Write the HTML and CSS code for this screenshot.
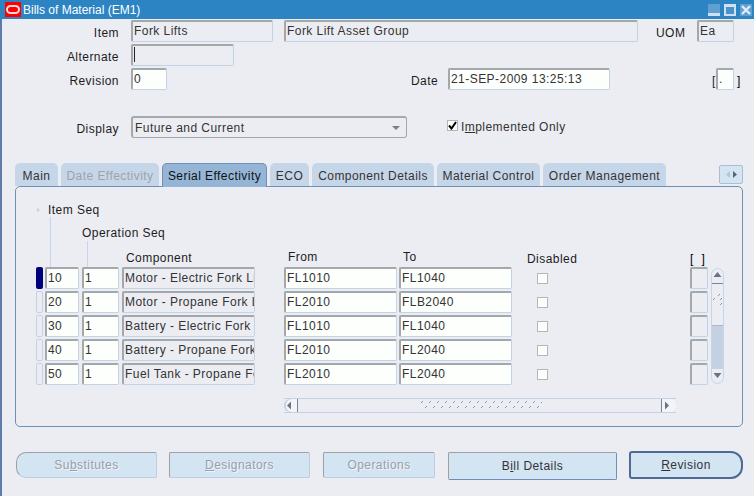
FILE: index.html
```html
<!DOCTYPE html>
<html lang="en">
<head>
    <meta charset="UTF-8">
    <title>Bills of Material (EM1)</title>
    <link rel="stylesheet" href="styles.css">
</head>
<body>
    <div class="window">
        <header class="titlebar">
            <div class="logo"><span class="logo-ring"></span></div>
            <span class="title">Bills of Material (EM1)</span>
            <div class="win-buttons">
                <svg width="12" height="12" viewBox="0 0 12 12"><rect width="12" height="12" fill="#5fa0d2"/><rect y="9" width="12" height="3" fill="#cfe0ef"/></svg>
                <svg width="12" height="12" viewBox="0 0 12 12"><rect width="12" height="12" fill="#cfe0ef"/><rect x="2" y="3" width="8" height="7" fill="#4a92cb"/></svg>
                <svg width="12" height="12" viewBox="0 0 12 12"><rect width="12" height="12" fill="#5fa0d2"/><path d="M2 2l8 8M10 2l-8 8" stroke="#e2edf6" stroke-width="2.4"/></svg>
            </div>
        </header>

        <div class="form-row first">
            <label class="lbl">Item</label>
            <div class="field w-item">Fork Lifts</div>
            <div class="field w-desc">Fork Lift Asset Group</div>
            <label class="lbl-inline uom-lbl">UOM</label>
            <div class="field w-uom">Ea</div>
        </div>
        <div class="form-row">
            <label class="lbl">Alternate</label>
            <div class="field w-alt"><span class="caret"></span></div>
        </div>
        <div class="form-row">
            <label class="lbl">Revision</label>
            <div class="field white w-rev">0</div>
            <label class="lbl-inline date-lbl">Date</label>
            <div class="field white w-date">21-SEP-2009 13:25:13</div>
            <span class="lbl-inline bracket-open">[</span>
            <div class="field white w-dff">.</div>
            <span class="lbl-inline bracket-close">]</span>
        </div>
        <div class="form-row display-row">
            <label class="lbl">Display</label>
            <div class="select w-select">Future and Current<span class="select-arrow"></span></div>
            <span class="check checked">
                <svg width="9" height="9" viewBox="0 0 9 9"><path d="M1 4.500l2.500 3L8 1" fill="none" stroke="#000" stroke-width="2"/></svg>
            </span>
            <span class="check-lbl">I<u>m</u>plemented Only</span>
        </div>

        <div class="tabs">
            <div class="tab t-main">Main</div>
            <div class="tab t-date off">Date Effectivity</div>
            <div class="tab t-serial active">Serial Effectivity</div>
            <div class="tab t-eco">ECO</div>
            <div class="tab t-comp">Component Details</div>
            <div class="tab t-mat">Material Control</div>
            <div class="tab t-order">Order Management</div>
            <div class="tab-scroll">
                <svg width="22" height="17" viewBox="0 0 22 17"><path d="M10 5v7l-4-3.500z" fill="#b5c4d6"/><path d="M13 5v7l4-3.500z" fill="#5c6470"/></svg>
            </div>
        </div>

        <div class="panel">
            <div class="seq-cols seq-head">
                <div class="head-item"><span class="tri"></span>Item Seq</div>
                <div class="line-item"></div>
                <div class="head-op">Operation Seq</div>
                <div class="line-op"></div>
                <div class="head head-comp">Component</div>
                <div class="head head-from">From</div>
                <div class="head head-to">To</div>
                <div class="head head-dis">Disabled</div>
                <div class="head head-dff">[ ]</div>
            </div>

            <div class="seq-cols seq-rows">
                <div class="vscroll">
                    <div class="vs-up"><svg width="13" height="10" viewBox="0 0 13 10"><path d="M2.500 7h8l-4-5z" fill="#6b7186"/></svg></div>
                    <div class="vs-thumb">
                        <svg width="9" height="14" viewBox="0 0 9 14"><path d="M6 0h1v1H6zM5 1h1v1H5zM1 4h1v1H1zM0 5h1v1H0zM8 4h1v1H8zM7 5h1v1H7zM8 9h1v1H8zM7 10h1v1H7z" fill="#8c97a8"/></svg>
                    </div>
                    <div class="vs-track"></div>
                    <div class="vs-down"><svg width="13" height="10" viewBox="0 0 13 10"><path d="M2.500 3h8l-4 5z" fill="#6b7186"/></svg></div>
                </div>

                <span class="ind current"></span>
                <div class="field white c-seq">10</div>
                <div class="field white c-op">1</div>
                <div class="field c-comp">Motor - Electric Fork Lift</div>
                <div class="field white c-range">FL1010</div>
                <div class="field white c-range">FL1040</div>
                <div class="c-dis"><span class="check"></span></div>
                <div class="field c-dff"></div>

                <span class="ind"></span>
                <div class="field white c-seq">20</div>
                <div class="field white c-op">1</div>
                <div class="field c-comp">Motor - Propane Fork Lift</div>
                <div class="field white c-range">FL2010</div>
                <div class="field white c-range">FLB2040</div>
                <div class="c-dis"><span class="check"></span></div>
                <div class="field c-dff"></div>

                <span class="ind"></span>
                <div class="field white c-seq">30</div>
                <div class="field white c-op">1</div>
                <div class="field c-comp">Battery - Electric Fork Lift</div>
                <div class="field white c-range">FL1010</div>
                <div class="field white c-range">FL1040</div>
                <div class="c-dis"><span class="check"></span></div>
                <div class="field c-dff"></div>

                <span class="ind"></span>
                <div class="field white c-seq">40</div>
                <div class="field white c-op">1</div>
                <div class="field c-comp">Battery - Propane Fork Lift</div>
                <div class="field white c-range">FL2010</div>
                <div class="field white c-range">FL2040</div>
                <div class="c-dis"><span class="check"></span></div>
                <div class="field c-dff"></div>

                <span class="ind"></span>
                <div class="field white c-seq">50</div>
                <div class="field white c-op">1</div>
                <div class="field c-comp">Fuel Tank - Propane Fork Lift</div>
                <div class="field white c-range">FL2010</div>
                <div class="field white c-range">FL2040</div>
                <div class="c-dis"><span class="check"></span></div>
                <div class="field c-dff"></div>
            </div>

            <div class="hscroll">
                <div class="hs-left"><svg width="10" height="11" viewBox="0 0 10 11"><path d="M7 1.500v8l-4-4z" fill="#6b7186"/></svg></div>
                <div class="hs-thumb">
                    <svg width="123" height="9" viewBox="0 0 123 9">
                        <defs>
                            <pattern id="grip" width="8" height="9" patternUnits="userSpaceOnUse">
                                <path d="M3 0h1v1H3zM2 1h1v1H2zM7 5h1v1H7zM6 6h1v1H6z" fill="#8c97a8"/>
                            </pattern>
                        </defs>
                        <rect width="123" height="9" fill="url(#grip)"/>
                    </svg>
                </div>
                <div class="hs-right"><svg width="10" height="11" viewBox="0 0 10 11"><path d="M3 1.500v8l4-4z" fill="#6b7186"/></svg></div>
            </div>
        </div>

        <div class="actions">
            <button class="btn off b-sub"><span>Su<u>b</u>stitutes</span></button>
            <button class="btn off b-des"><span><u>D</u>esignators</span></button>
            <button class="btn off b-ops"><span>Operations</span></button>
            <button class="btn b-bill"><span>B<u>i</u>ll Details</span></button>
            <button class="btn b-rev"><span><u>R</u>evision</span></button>
        </div>
    </div>
</body>
</html>
```

FILE: styles.css
```css
* {
    margin: 0;
    padding: 0;
    box-sizing: border-box;
}

html, body {
    width: 754px;
    height: 496px;
    overflow: hidden;
}

body {
    background: #ecedf3;
    color: #1c1c1c;
    font-family: "Liberation Sans", Arial, sans-serif;
    font-size: 12px;
    letter-spacing: 0.45px;
}

.window {
    height: 496px;
    border-left: 2px solid #5f7ca6;
}

/* title bar */
.titlebar {
    display: flex;
    align-items: center;
    height: 19px;
    margin-left: -2px;
    background: #2d84c3;
    color: #fff;
}

.logo {
    display: flex;
    align-items: center;
    justify-content: center;
    width: 16px;
    height: 15px;
    margin-left: 5px;
    background: #f00;
}

.logo-ring {
    width: 14px;
    height: 9px;
    border: 2px solid #ffd9d9;
    border-radius: 5px;
}

.title {
    margin-left: 2px;
    letter-spacing: 0;
}

.win-buttons {
    display: flex;
    gap: 4px;
    margin-left: auto;
    margin-right: 2px;
}

/* header form */
.form-row {
    display: flex;
    align-items: center;
    height: 22px;
    margin-top: 2px;
}

.form-row.first {
    margin-top: 1px;
}

.form-row.display-row {
    margin-top: 26px;
}

.lbl {
    width: 117px;
    margin-right: 12px;
    padding-top: 3px;
    text-align: right;
}

.lbl-inline {
    padding-top: 3px;
}

.field {
    flex: none;
    height: 22px;
    padding: 0 1px;
    overflow: hidden;
    border: 1px solid #c3d3e6;
    border-top: 2px solid #a5a8ab;
    border-left: 2px solid #a5a8ab;
    border-radius: 2px;
    background: #ecedf3;
    color: #333;
    line-height: 18px;
    white-space: nowrap;
}

.field.white {
    background: #fcfffc;
}

.w-item { width: 142px; }
.w-desc { width: 354px; margin-left: 11px; }
.w-uom { width: 37px; margin-left: 11px; }
.w-alt { width: 103px; }
.w-rev { width: 36px; }
.w-date { width: 162px; margin-left: 11px; }
.w-dff { width: 18px; margin: 0 3px 0 2px; }

.uom-lbl { margin-left: 18px; width: 30px; }
.date-lbl { margin-left: 244px; width: 26px; }
.bracket-open { margin-left: 102px; width: 2px; }
.bracket-close { color: #000; }

.caret {
    display: block;
    width: 1px;
    height: 15px;
    margin-top: 1px;
    background: #222;
}

.select {
    display: flex;
    align-items: center;
    justify-content: space-between;
    height: 22px;
    padding: 0 6px 0 2px;
    border: 1px solid #a5a8ab;
    border-top-width: 2px;
    border-left-width: 2px;
    border-radius: 3px;
    color: #333;
}

.w-select { width: 276px; }

.select-arrow {
    border-top: 4px solid #7a8088;
    border-left: 4px solid transparent;
    border-right: 4px solid transparent;
}

.check {
    display: inline-flex;
    align-items: center;
    justify-content: center;
    width: 11px;
    height: 11px;
    border: 1px solid #b5b5b5;
    background: #fcfffc;
}

.check.checked {
    margin-left: 40px;
    margin-top: -3px;
}

.check-lbl {
    margin-left: 3px;
    color: #333;
}

/* tabs */
.tabs {
    display: flex;
    align-items: flex-start;
    position: relative;
    z-index: 1;
    height: 23px;
    margin-top: 25px;
    margin-left: 13px;
    gap: 3px;
}

.tab {
    flex: none;
    height: 23px;
    border-radius: 5px 5px 0 0;
    background: #c6d6e9;
    color: #333;
    line-height: 26px;
    text-align: center;
}

.tab.off {
    color: #9da3a8;
}

.tab.active {
    height: 24px;
    border: 1px solid #6f90b5;
    border-bottom: 0;
    background: #95b5d7;
    color: #111;
    line-height: 24px;
}

.t-main { width: 43px; }
.t-date { width: 98px; }
.t-serial { width: 105px; }
.t-eco { width: 39px; }
.t-comp { width: 122px; }
.t-mat { width: 103px; }
.t-order { width: 123px; }

.tab-scroll {
    width: 24px;
    height: 19px;
    margin-top: 2px;
    margin-left: 50px;
    border: 1px solid #a9bdd4;
    border-radius: 2px;
    background: #d3e4f3;
}

/* panel */
.panel {
    width: 728px;
    height: 241px;
    margin-left: 13px;
    padding: 16px 0 0 20px;
    border: 1px solid #6f90b5;
    border-radius: 5px;
}

.seq-cols {
    display: grid;
    grid-template-columns: 9px 37px 40px 162px 115px 115px 176px 21px 13px;
}

.seq-head {
    grid-template-rows: 14px 24px 26px;
}

.seq-rows {
    grid-auto-rows: 24px;
}

.head-item {
    display: flex;
    align-items: center;
    grid-column: 1 / span 4;
    grid-row: 1;
    gap: 8px;
}

.tri {
    margin-left: 1px;
    border-left: 3px solid #c3d0e0;
    border-top: 2px solid transparent;
    border-bottom: 2px solid transparent;
}

.line-item {
    grid-column: 2;
    grid-row: 2 / span 2;
    margin-left: 5px;
    border-left: 1px solid #c6d6e9;
}

.head-op {
    grid-column: 3 / span 3;
    grid-row: 2;
    align-self: end;
    line-height: 15px;
}

.line-op {
    grid-column: 3;
    grid-row: 3;
    margin-left: 5px;
    border-left: 1px solid #c6d6e9;
}

.head {
    grid-row: 3;
    align-self: end;
    line-height: 14px;
}

.head-comp { grid-column: 4; padding: 0 0 2px 4px; }
.head-from { grid-column: 5; padding: 0 0 3px 4px; }
.head-to { grid-column: 6; padding: 0 0 3px 4px; }
.head-dis { grid-column: 7; padding: 0 0 1px 13px; }
.head-dff { grid-column: 8 / span 2; padding-bottom: 1px; color: #000; word-spacing: 4px; }

.ind {
    grid-column: 1;
    width: 7px;
    height: 22px;
    border: 1px solid #c3d3e6;
    border-radius: 2px;
}

.ind.current {
    border: 0;
    background: #00007b;
}

.c-seq { width: 34px; }
.c-op { width: 37px; }
.c-comp { width: 133px; }
.c-range { width: 113px; }
.c-dff { width: 18px; }

.c-dis {
    display: flex;
    align-items: center;
    padding-left: 23px;
    height: 22px;
}

.vscroll {
    display: flex;
    flex-direction: column;
    grid-column: 9;
    grid-row: 1 / span 5;
    height: 116px;
    margin-top: 1px;
    overflow: hidden;
    border: 1px solid #c6d6e9;
    border-radius: 7px;
    background: #ecedf3;
}

.vs-up {
    height: 15px;
    border-bottom: 1px solid #7c8399;
    margin: 0 -1px;
}

.vs-thumb {
    display: flex;
    align-items: center;
    justify-content: center;
    height: 42px;
    border-bottom: 1px solid #a9b8cc;
    margin: 0 -1px;
    padding-bottom: 8px;
}

.vs-track {
    flex: 1;
    margin: 0 -1px;
    background: #c3d1e3;
}

.vs-down {
    height: 14px;
    margin: 0 -1px;
}

.hscroll {
    display: flex;
    width: 392px;
    height: 15px;
    margin-top: 11px;
    margin-left: 248px;
    border: 1px solid #c3d1e3;
    border-width: 1px 0;
}

.hs-left {
    width: 14px;
    border-right: 1px solid #7c8399;
    border-radius: 6px 0 0 6px;
    background: #f4f5f9;
    box-shadow: inset 2px 0 0 #c3d1e3;
}

.hs-left svg,
.hs-right svg {
    display: block;
    margin-top: 1px;
}

.hs-thumb {
    flex: 1;
    padding: 2px 0 0 121px;
}

.hs-thumb svg {
    display: block;
}

.hs-right {
    width: 15px;
    border-left: 1px solid #7c8399;
    border-radius: 0 6px 6px 0;
    background: #f4f5f9;
}

/* bottom buttons */
.actions {
    display: flex;
    align-items: flex-start;
    margin-top: 25px;
    margin-left: 14px;
}

.btn {
    flex: none;
    height: 26px;
    border: 1px solid #6f8fb8;
    border-top: 1px solid #a0a0a0;
    border-left: 1px solid #a0a0a0;
    border-radius: 2px;
    background: #d3e4f3;
    color: #333;
    font: inherit;
    letter-spacing: inherit;
}

.btn.off {
    border-right-color: #bccde0;
    border-bottom-color: #bccde0;
    color: #9a9fa5;
    text-shadow: 1px 1px 0 #eef4fa;
}

.b-sub { width: 141px; border-radius: 10px 2px 2px 10px; }
.b-des { width: 141px; margin-left: 12px; }
.b-ops { width: 112px; margin-left: 13px; }
.b-bill { width: 169px; height: 28px; margin-left: 13px; }

.b-rev {
    width: 114px;
    height: 28px;
    margin-top: -1px;
    margin-left: 12px;
    border: 2px solid #4e6a93;
    border-radius: 3px 12px 12px 3px;
}
```
